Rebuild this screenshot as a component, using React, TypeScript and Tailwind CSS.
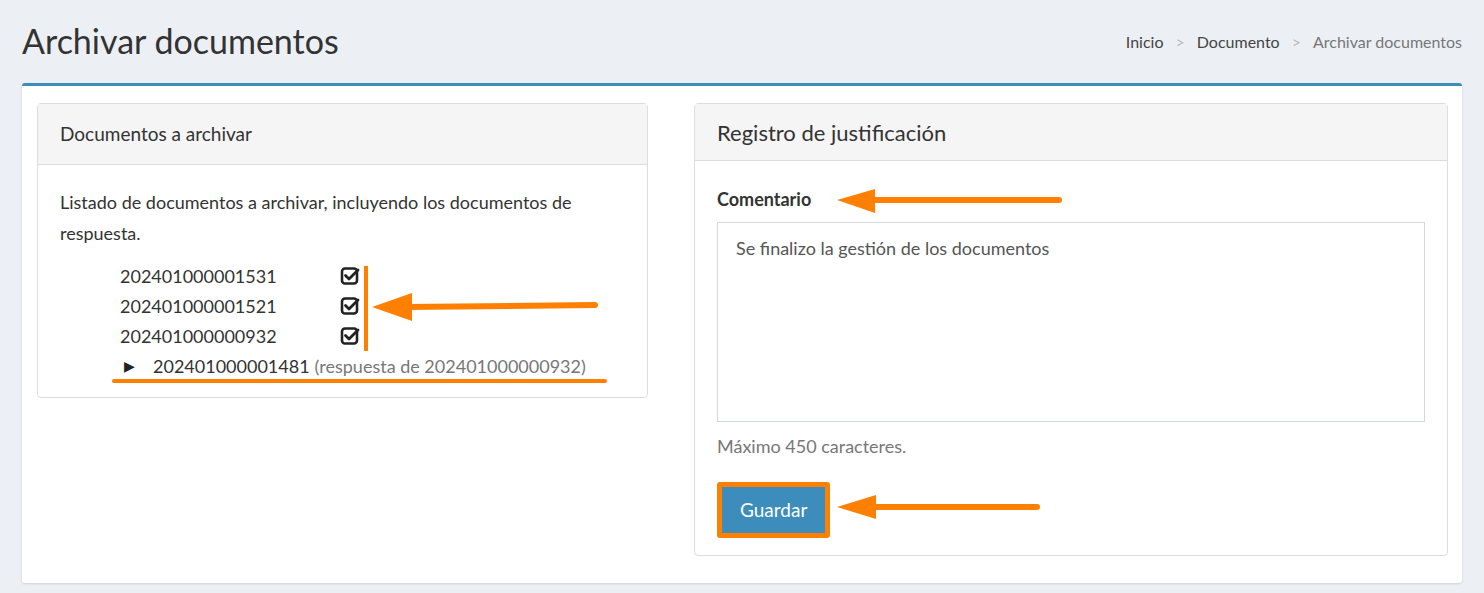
import React from "react";

const Check = () => (
  <svg width="20" height="20" viewBox="0 0 20 20">
    <rect x="2" y="2.5" width="15" height="15" rx="3" fill="none" stroke="#222" strokeWidth="2.6" />
    <path d="M5.5 9.5 L9 13 L18 4" fill="none" stroke="#222" strokeWidth="2.8" strokeLinecap="round" strokeLinejoin="round" />
  </svg>
);

export default function App() {
  const O = "#ff8000";
  return (
    <div className="relative w-[1484px] h-[593px] bg-[#ecf0f5] text-[#333] overflow-hidden" style={{ fontFamily: "Lato, 'Open Sans', sans-serif" }}>
      <div className="flex items-center justify-between px-[22px] h-[83px] pb-[2px]">
        <h1 className="text-[34px] font-normal text-[#333]">Archivar documentos</h1>
        <div className="flex items-center gap-[12px] text-[16px] mt-[3px]">
          <span className="text-[#444]">Inicio</span>
          <span className="text-[#bbb]">&gt;</span>
          <span className="text-[#444]">Documento</span>
          <span className="text-[#bbb]">&gt;</span>
          <span className="text-[#777]">Archivar documentos</span>
        </div>
      </div>
      <div className="mx-[22px] h-[500px] bg-white border-t-[3px] border-[#3c8dbc] rounded-[3px] shadow-sm pt-[17px] pl-[15px] flex gap-[46px] items-start">
        <div className="w-[611px] border border-[#ddd] rounded-[4px]">
          <div className="h-[61px] bg-[#f5f5f5] border-b border-[#ddd] flex items-center px-[22px] text-[19px]">Documentos a archivar</div>
          <div className="px-[22px] pt-[22px] pb-[16px] text-[18px]">
            <p className="leading-[31px]">Listado de documentos a archivar, incluyendo los documentos de respuesta.</p>
            <div className="mt-[12px] pl-[60px] leading-[30px]">
              {["202401000001531", "202401000001521", "202401000000932"].map((n) => (
                <div key={n} className="flex items-center">
                  <span className="w-[220px]">{n}</span>
                  <Check />
                </div>
              ))}
              <div className="flex items-center">
                <span className="text-[#222] text-[14px] ml-[4px] mr-[18px]">▶</span>
                <span>202401000001481</span>
                <span className="text-[#777] ml-[5px]">(respuesta de 202401000000932)</span>
              </div>
            </div>
          </div>
        </div>
        <div className="w-[754px] h-[453px] border border-[#ddd] rounded-[4px]">
          <div className="h-[57px] bg-[#f5f5f5] border-b border-[#ddd] flex items-center px-[22px] text-[22px]">Registro de justificación</div>
          <div className="px-[22px] pt-[25px]">
            <div className="font-bold text-[18px] leading-[26px]">Comentario</div>
            <div className="mt-[10px] h-[200px] border border-[#d2d6de] px-[18px] py-[12px] text-[18px] text-[#555]">Se finalizo la gestión de los documentos</div>
            <div className="mt-[11px] text-[18px] text-[#777]">Máximo 450 caracteres.</div>
            <div className="mt-[22px] inline-block border-[5px] border-[#ff8000] rounded-[3px]">
              <div className="bg-[#3c8dbc] text-white text-[19px] px-[18px] h-[46px] flex items-center">Guardar</div>
            </div>
          </div>
        </div>
      </div>
      <svg className="absolute inset-0 pointer-events-none" width="1484" height="593">
        <line x1="366" y1="266" x2="366" y2="351" stroke={O} strokeWidth="4" />
        <line x1="405" y1="307" x2="595" y2="305" stroke={O} strokeWidth="6" strokeLinecap="round" />
        <polygon points="372,307 412,293 412,321" fill={O} />
        <line x1="114" y1="381" x2="605" y2="381" stroke={O} strokeWidth="4" strokeLinecap="round" />
        <line x1="870" y1="200" x2="1059" y2="200" stroke={O} strokeWidth="6" strokeLinecap="round" />
        <polygon points="837,200 875,189 875,213" fill={O} />
        <line x1="870" y1="507" x2="1037" y2="507" stroke={O} strokeWidth="6" strokeLinecap="round" />
        <polygon points="837,507 876,495 876,519" fill={O} />
      </svg>
    </div>
  );
}
